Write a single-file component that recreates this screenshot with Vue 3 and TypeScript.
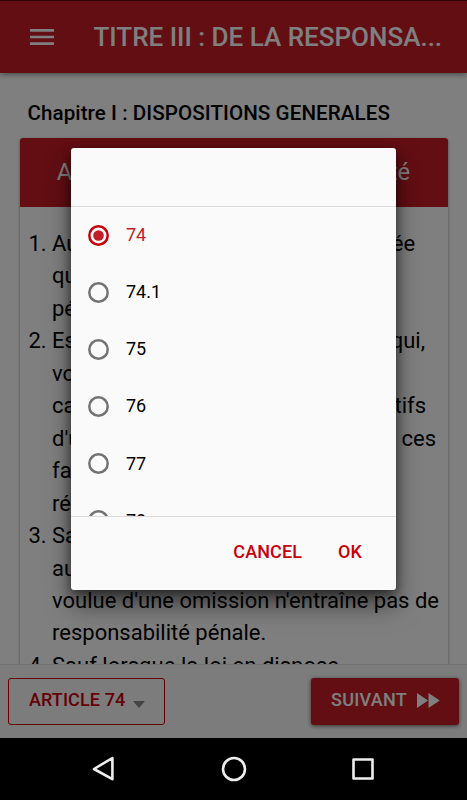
<script setup lang="ts">
import { ref } from 'vue'

interface Line {
  text: string
  width: number
}

const options = ['74', '74.1', '75', '76', '77', '78']
const selected = ref('74')

const paragraphs: Line[][] = [
  [
    { text: 'Aucune peine ne peut être prononcée', width: 363 },
    { text: "qu'à l'encontre d'une personne", width: 310 },
    { text: 'pénalement responsable.', width: 240 },
  ],
  [
    { text: 'Est pénalement responsable celui qui,', width: 373 },
    { text: 'volontairement, commet les faits', width: 320 },
    { text: 'caractérisés, les éléments constitutifs', width: 374 },
    { text: "d'une infraction avec l'intention que ces", width: 384 },
    { text: 'faits aient pour conséquence la', width: 310 },
    { text: "réalisation de l'infraction.", width: 255 },
  ],
  [
    { text: 'Sauf lorsque la loi en dispose', width: 288 },
    { text: 'autrement, la conséquence même', width: 330 },
    { text: "voulue d'une omission n'entraîne pas de", width: 387 },
    { text: 'responsabilité pénale.', width: 214 },
  ],
  [{ text: 'Sauf lorsque la loi en dispose', width: 287 }],
]
</script>

<template>
  <div class="screen">
    <div class="app">
      <header class="toolbar">
        <svg class="menu" viewBox="0 0 24 16" width="24" height="16">
          <path d="M0 0h24v2.7H0zM0 6.7h24v2.6H0zM0 13.3h24V16H0z" fill="currentColor" />
        </svg>
        <h1>TITRE III : DE LA RESPONSA...</h1>
      </header>
      <main>
        <h2>Chapitre I : DISPOSITIONS GENERALES</h2>
        <section class="card">
          <h3>Article 74 : Intention et culpabilité</h3>
          <div class="articles">
            <div v-for="(lines, i) in paragraphs" :key="i" class="article">
              <span class="number">{{ i + 1 }}.</span>
              <div>
                <div v-for="line in lines" :key="line.text" class="line" :style="{ width: line.width + 'px' }">{{ line.text }}</div>
              </div>
            </div>
          </div>
        </section>
      </main>
      <footer class="bottom">
        <button class="select">
          <span>ARTICLE 74</span>
          <svg viewBox="0 0 12 7" width="12" height="7"><path d="M0 0h12L6 7z" fill="#888" /></svg>
        </button>
        <button class="next">
          <span>SUIVANT</span>
          <svg viewBox="0 0 23 15" width="23" height="15"><path d="M0 0l11 7.5L0 15zM11.5 0l11.3 7.5L11.5 15z" fill="currentColor" /></svg>
        </button>
      </footer>
      <div class="backdrop">
        <div class="dialog">
          <div class="dialog-head"></div>
          <div class="options">
            <div v-for="option in options" :key="option" class="option" :class="{ active: option === selected }" @click="selected = option">
              <svg class="radio" viewBox="0 0 21 21" width="21" height="21">
                <circle class="ring" cx="10.5" cy="10.5" r="9.2" />
                <circle v-if="option === selected" class="dot" cx="10.5" cy="10.5" r="5.3" />
              </svg>
              <span>{{ option }}</span>
            </div>
          </div>
          <div class="actions"><button>CANCEL</button><button>OK</button></div>
        </div>
      </div>
    </div>
    <nav>
      <svg viewBox="0 0 26 26" width="26" height="26"><path d="M21.4 2v21.2L3 13z" /></svg>
      <svg viewBox="0 0 26 26" width="26" height="26"><circle cx="13" cy="13" r="11" /></svg>
      <svg viewBox="0 0 26 26" width="26" height="26"><path d="M3.5 3.5h19v19h-19z" /></svg>
    </nav>
  </div>
</template>

<style>
body { margin: 0; }
</style>

<style scoped>
* { box-sizing: border-box; }
.screen { width: 467px; height: 800px; overflow: hidden; background: #000; font-family: Roboto, "Liberation Sans", sans-serif; color: #000; }
.app { position: relative; height: 738px; display: flex; flex-direction: column; background: #fff; }
h1, h2, h3 { margin: 0; white-space: nowrap; }
button { font: 500 18px Roboto, sans-serif; border: 0; margin: 0; background: none; }
.toolbar { flex: none; height: 73px; display: flex; align-items: center; padding: 0 0 1px 29.5px; gap: 40px; color: #fff; background: #c41c26; border-top: 1px solid #60060b; box-shadow: 0 1px 6px rgba(0, 0, 0, .5); position: relative; }
h1 { font-size: 26px; font-weight: 500; line-height: 36px; }
main { flex: 1; min-height: 0; overflow: hidden; padding: 28px 19.5px 0; }
h2 { font-size: 20.6px; line-height: 24px; font-weight: 500; padding-left: 8px; letter-spacing: .07px; }
.card { margin-top: 13px; border-radius: 3px 3px 0 0; box-shadow: 0 1px 3px rgba(0, 0, 0, .45); }
h3 { height: 69px; padding-bottom: 2px; display: flex; align-items: center; justify-content: center; color: #fff; background: #c41c26; border-radius: 3px 3px 0 0; font-size: 23.8px; font-weight: 400; }
.articles { padding: 21px 0 0 9px; font-size: 22px; line-height: 32.45px; }
.article { display: flex; }
.number { width: 23.5px; flex: none; }
.line { white-space: nowrap; text-align-last: justify; }
.bottom { position: relative; flex: none; height: 74px; display: flex; justify-content: space-between; align-items: flex-start; padding: 13px 8px 0; background: #f9f9f9; border-top: 1px solid #e3e3e3; }
.bottom button { height: 47px; display: flex; align-items: center; border-radius: 3px; padding-bottom: 5px; }
.select { width: 157px; padding-left: 20px; gap: 8px; color: #c8000a; border: 1px solid #c8000a !important; }
.select svg { margin-top: 10px; }
.next { width: 148px; padding-left: 20px; gap: 10px; color: #fff; background: #c41c26 !important; box-shadow: 0 1px 4px rgba(0, 0, 0, .6); }
.select span { letter-spacing: .1px; }
.next span { letter-spacing: .25px; }
.next svg { margin-top: 2px; }
.backdrop { position: absolute; inset: 0; display: flex; align-items: center; justify-content: center; background: rgba(0, 0, 0, .5); }
.dialog { width: 325px; height: 442px; display: flex; flex-direction: column; background: #fafafa; border-radius: 3px; box-shadow: 0 15px 24px rgba(0, 0, 0, .5), 0 3px 10px rgba(0, 0, 0, .45); overflow: hidden; }
.dialog-head { height: 58px; flex: none; }
.options { height: 311px; flex: none; overflow: hidden; border-top: 1px solid #dcdcdc; border-bottom: 1px solid #dcdcdc; }
.option { height: 57.15px; display: flex; align-items: center; padding-left: 17px; gap: 17px; font-size: 18px; padding-bottom: 2px; }
.radio { flex: none; margin-top: 1px; }
.ring { fill: none; stroke: #737373; stroke-width: 2.5; }
.dot { fill: #c41c26; }
.active { color: #c41c26; }
.active .ring { stroke: #c8000a; }
.actions { flex: 1; display: flex; align-items: center; justify-content: flex-end; padding: 0 34px 4px 0; gap: 36px; }
.actions button { color: #c8000a; padding: 0; letter-spacing: .1px; }
nav { height: 62px; display: flex; justify-content: center; align-items: center; gap: 103.5px; }
nav svg { fill: none; stroke: #eee; stroke-width: 2.6; stroke-linejoin: round; }
</style>
